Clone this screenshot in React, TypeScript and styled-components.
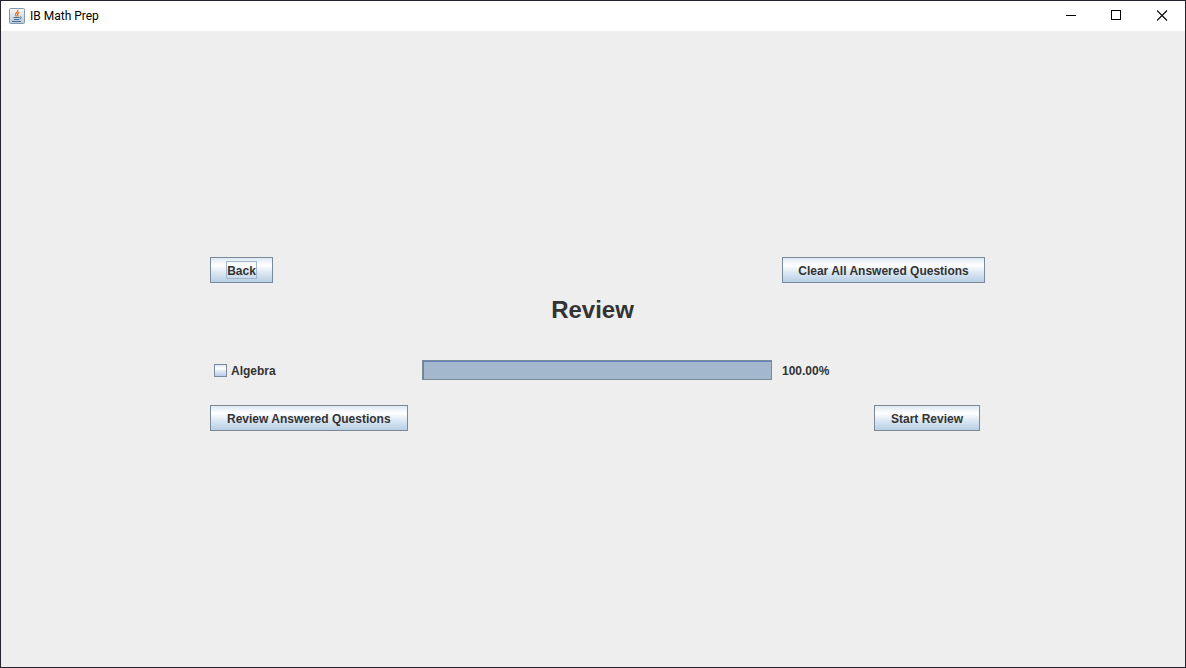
import React from "react";
import styled, { createGlobalStyle } from "styled-components";

const GlobalStyle = createGlobalStyle`
  *, *::before, *::after { box-sizing: border-box; }
  body { margin: 0; background: #eeeeee; }
`;

const Window = styled.div`
  display: flex;
  flex-direction: column;
  min-height: 100vh;
  border: 1px solid #25222b;
  background: #eeeeee;
  color: #333333;
  font: bold 12px/18px "Liberation Sans", Arial, sans-serif;
`;

const TitleBar = styled.header`
  display: flex;
  align-items: center;
  height: 30px;
  padding-left: 8px;
  background: #ffffff;
  color: #000000;
`;

const WindowTitle = styled.span`
  flex: 1;
  padding-left: 5px;
  font: 12px/16px Roboto, "Segoe UI", sans-serif;
`;

const WindowControl = styled.button`
  display: flex;
  align-items: center;
  justify-content: center;
  width: 46px;
  height: 30px;
  padding: 0 0 2px;
  border: 0;
  background: transparent;
  color: inherit;
`;

const Content = styled.main`
  flex: 1;
  display: flex;
  align-items: center;
  justify-content: center;
  padding: 0 0 10px 9px;
`;

const Grid = styled.div`
  display: grid;
  grid-template-columns: 212px 350px 213px;
  align-items: center;
`;

const Button = styled.button<{ $fill?: boolean }>`
  width: ${({ $fill }) => ($fill ? "100%" : "auto")};
  min-width: 63px;
  height: 26px;
  padding: ${({ $fill }) => ($fill ? "2px 0 0" : "2px 16px 0")};
  border: 1px solid #7a8a99;
  background: linear-gradient(#dde8f3 0%, #ffffff 30%, #dde8f3 60%, #b8cfe5 100%);
  color: inherit;
  font: inherit;
  white-space: nowrap;
`;

const FocusButton = styled(Button)`
  padding: 0 15px;
`;

const FocusRing = styled.span`
  display: block;
  height: 18px;
  border: 1px solid #a3b8cc;
`;

const Start = styled.div`
  justify-self: start;
`;

const ClearCell = styled.div`
  grid-column: 3;
  padding-left: 10px;
`;

const Heading = styled.h1`
  grid-column: 1 / -1;
  margin: 12px 0 36px;
  padding-right: 10px;
  font-size: 24px;
  line-height: 29px;
  text-align: center;
`;

const Topic = styled.label`
  display: flex;
  align-items: center;
  gap: 4px;
  padding-left: 4px;
`;

const TopicName = styled.span`
  padding-top: 2px;
`;

const Checkbox = styled.input`
  appearance: none;
  width: 13px;
  height: 13px;
  margin: 0;
  border: 1px solid #7a8a99;
  background: linear-gradient(#dde8f3 0%, #ffffff 30%, #dde8f3 60%, #b8cfe5 100%);

  &:checked {
    background: #7a8a99;
  }
`;

const ProgressTrack = styled.div`
  height: 20px;
  border: 1px solid #7a8a99;
  background: #eeeeee;
`;

const ProgressFill = styled.div`
  height: 100%;
  border: solid #6382bf;
  border-width: 1px 0 0 1px;
  background: #a3b8cc;
`;

const Percent = styled.span`
  padding: 2px 0 0 10px;
`;

const Footer = styled.div`
  grid-column: 1 / -1;
  display: flex;
  justify-content: space-between;
  margin-top: 25px;
  padding-right: 5px;
`;

const JavaIcon = () => (
  <svg width="16" height="16" viewBox="0 0 16 16" fill="none" aria-hidden="true">
    <defs>
      <linearGradient id="tile" x1="0" y1="0" x2="0" y2="1">
        <stop offset="0" stopColor="#f5f8fa" />
        <stop offset="1" stopColor="#b9cad8" />
      </linearGradient>
    </defs>
    <rect x="0.5" y="0.5" width="15" height="15" rx="1" fill="url(#tile)" stroke="#8399ab" />
    <path d="M8.8 2c1 2-3.3 3-2.2 5.1.3.6.9 1 .9 1.5M10.4 4.4C8.7 5.2 8 6 8.8 7c.4.5.2 1-.2 1.4" stroke="#e8721c" strokeWidth="1.3" />
    <path d="M4.5 9.5h6M5 11.5h5M3 13.5h9M10.8 9c2.2-.5 2 1.5-.3 2.2" stroke="#3f6d94" strokeWidth="1" />
  </svg>
);

const progress = 100;

export default function App() {
  return (
    <>
      <GlobalStyle />
      <Window>
        <TitleBar>
          <JavaIcon />
          <WindowTitle>IB Math Prep</WindowTitle>
          <WindowControl aria-label="Minimize">
            <svg width="11" height="11" shapeRendering="crispEdges">
              <path d="M1 5.5h10" stroke="currentColor" />
            </svg>
          </WindowControl>
          <WindowControl aria-label="Maximize">
            <svg width="11" height="11" shapeRendering="crispEdges">
              <path d="M.5.5h9v9h-9z" fill="none" stroke="currentColor" />
            </svg>
          </WindowControl>
          <WindowControl aria-label="Close">
            <svg width="11" height="11">
              <path d="M0 .5l10 10M10 .5l-10 10" stroke="currentColor" strokeWidth="1.1" />
            </svg>
          </WindowControl>
        </TitleBar>
        <Content>
          <Grid>
            <Start>
              <FocusButton>
                <FocusRing>Back</FocusRing>
              </FocusButton>
            </Start>
            <ClearCell>
              <Button $fill>Clear All Answered Questions</Button>
            </ClearCell>
            <Heading>Review</Heading>
            <Topic>
              <Checkbox type="checkbox" />
              <TopicName>Algebra</TopicName>
            </Topic>
            <ProgressTrack
              role="progressbar"
              aria-label="Algebra progress"
              aria-valuenow={progress}
              aria-valuemin={0}
              aria-valuemax={100}
            >
              <ProgressFill style={{ width: `${progress}%` }} />
            </ProgressTrack>
            <Percent>{progress.toFixed(2)}%</Percent>
            <Footer>
              <Button>Review Answered Questions</Button>
              <Button>Start Review</Button>
            </Footer>
          </Grid>
        </Content>
      </Window>
    </>
  );
}
